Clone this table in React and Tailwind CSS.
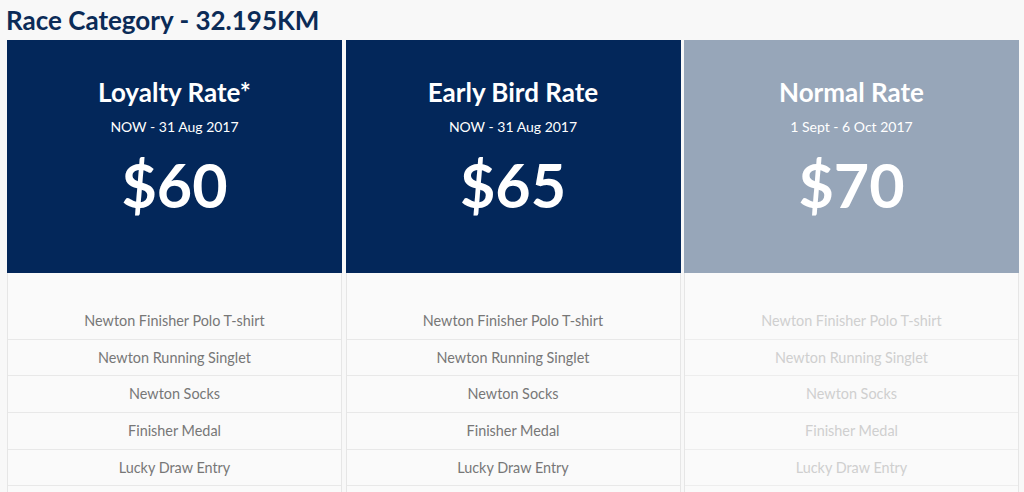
const plans = [
  { name: "Loyalty Rate*", dates: "NOW - 31 Aug 2017", price: "$60", active: true },
  { name: "Early Bird Rate", dates: "NOW - 31 Aug 2017", price: "$65", active: true },
  { name: "Normal Rate", dates: "1 Sept - 6 Oct 2017", price: "$70", active: false },
];

const perks = [
  "Newton Finisher Polo T-shirt",
  "Newton Running Singlet",
  "Newton Socks",
  "Finisher Medal",
  "Lucky Draw Entry",
];

const PlanCard = ({ plan }) => {
  return (
    <div className="flex flex-col">
      <div
        className={
          plan.active
            ? "h-[233px] bg-[#03275a] flex flex-col items-center text-white"
            : "h-[233px] bg-[#97a6b9] flex flex-col items-center text-white"
        }
      >
        <div className="mt-[36px] text-[26px] leading-[32px] font-bold">{plan.name}</div>
        <div className="mt-[9px] text-[14px] leading-[20px]">{plan.dates}</div>
        <div className="mt-[13px] text-[61px] leading-[70px] font-bold">{plan.price}</div>
      </div>
      <div className="bg-[#fafafa] border-x border-[#e6e6e6] pt-[30px]">
        {perks.map((p) => (
          <div
            key={p}
            className={
              plan.active
                ? "h-[36.67px] flex items-center justify-center border-b border-[#e8e8e8] text-[14.4px] text-[#777777]"
                : "h-[36.67px] flex items-center justify-center border-b border-[#ededed] text-[14.4px] text-[#cfcfcf]"
            }
          >
            {p}
          </div>
        ))}
        <div className="h-[36.67px]" />
      </div>
    </div>
  );
};

export default function App() {
  return (
    <div
      className="w-[1024px] h-[492px] overflow-hidden bg-[#f8f8f8]"
      style={{ fontFamily: "Lato, 'Open Sans', sans-serif" }}
    >
      <h1 className="pl-[6px] pt-[5px] h-[40px] text-[26px] leading-[30px] font-bold text-[#0b2b57]">
        Race Category - 32.195KM
      </h1>
      <div className="grid grid-cols-3 gap-x-[3.5px] pl-[7px] pr-[5px]">
        {plans.map((plan) => (
          <PlanCard key={plan.name} plan={plan} />
        ))}
      </div>
    </div>
  );
}
